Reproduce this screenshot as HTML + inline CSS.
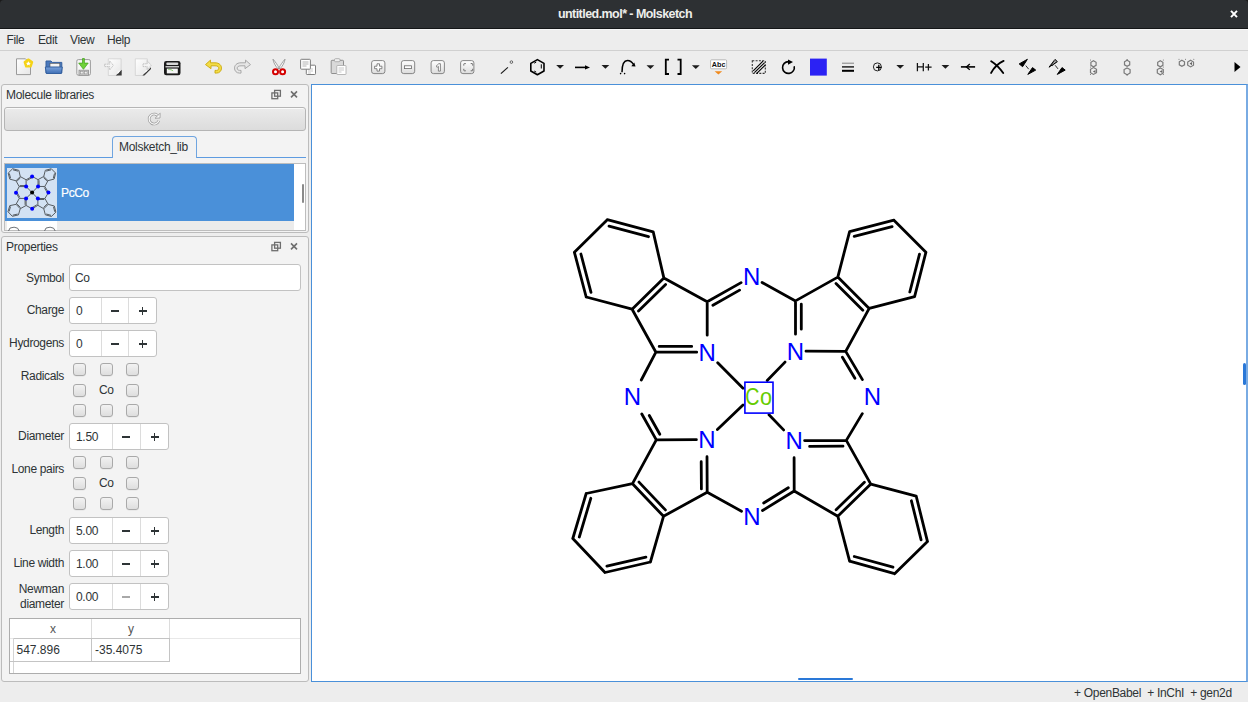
<!DOCTYPE html>
<html><head><meta charset="utf-8">
<style>
*{margin:0;padding:0;box-sizing:border-box}
html,body{width:1248px;height:702px;overflow:hidden;background:#ededed;font-family:"Liberation Sans",sans-serif;color:#2e3436}
.a{position:absolute}
#title{left:0;top:0;width:1248px;height:29px;background:#2d3033;border-bottom:1px solid #141618;border-radius:4px 4px 0 0}
#title .t{left:0;width:1248px;top:6.5px;padding-left:2px;text-align:center;color:#eeeeec;font-size:12.5px;font-weight:bold;letter-spacing:-0.55px}
#menu{left:0;top:29px;width:1248px;height:22px;background:#ededed;border-bottom:1px solid #d0d0d0;border-top:1px solid #f6f6f6}
.mi{top:3px;font-size:12px;letter-spacing:-0.4px;color:#2e3436}
#tb{left:0;top:51px;width:1248px;height:33px;background:#ededed}
.dock{background:#f3f3f3;border:1px solid #bcbcbc;border-radius:3px}
.lbl{font-size:12px;letter-spacing:-0.35px;color:#2e3436;text-align:right}
.inp{background:#fff;border:1px solid #c2c2c2;border-radius:3px}
.spin{background:#fff;border:1px solid #c2c2c2;border-radius:3px}
.spin .d{position:absolute;top:0;bottom:0;border-left:1px solid #dcdcdc}
.txt{font-size:12px;letter-spacing:-0.3px}
.cb{width:12.6px;height:12.6px;margin-top:-0.6px;border:1px solid #a9a9a9;border-radius:3px;background:linear-gradient(#f2f2f2,#dedede);box-shadow:0 0.5px 0 rgba(0,0,0,0.08)}
#canvas{left:311px;top:84px;width:937px;height:598px;background:#fff;border:1px solid #4a90d9;border-right:2px solid #79abe3}
.nl{font-family:"Liberation Sans",sans-serif;font-size:24px;fill:#0000ff;text-anchor:middle}
.co{font-family:"Liberation Sans",sans-serif;font-size:24px;fill:#66cc00}
</style></head><body>
<div class="a" style="left:0;top:0;width:1248px;height:8px;background:#1a1a1a"></div>
<div id="title" class="a"><div class="t a">untitled.mol* - Molsketch</div>
<svg class="a" style="left:1228px;top:9px" width="12" height="12"><path d="M3 1.9L9 8.1M9 1.9L3 8.1" stroke="#fff" stroke-width="2"/></svg>
</div>
<div id="menu" class="a">
<div class="mi a" style="left:6.5px">File</div>
<div class="mi a" style="left:38px">Edit</div>
<div class="mi a" style="left:70px">View</div>
<div class="mi a" style="left:107px">Help</div>
</div>
<div id="tb" class="a"></div>
<svg class="a" style="left:0;top:0" width="1248" height="90" viewBox="0 0 1248 90">
<defs>
<linearGradient id="pg" x1="0" y1="0" x2="1" y2="1"><stop offset="0" stop-color="#ffffff"/><stop offset="1" stop-color="#e6e6e6"/></linearGradient>
<linearGradient id="bg" x1="0" y1="0" x2="0" y2="1"><stop offset="0" stop-color="#ffffff"/><stop offset="1" stop-color="#dcdcdc"/></linearGradient>
<linearGradient id="fg" x1="0" y1="0" x2="0" y2="1"><stop offset="0" stop-color="#7aa3dc"/><stop offset="1" stop-color="#3e6eb4"/></linearGradient>
</defs>
<!-- new -->
<path d="M16.5 58.8h9l5 5v10.8h-14z" fill="url(#pg)" stroke="#9a9a9a" stroke-width="1"/>
<path d="M28.4 59.3l3.9 2.8-1.5 4.6h-4.8l-1.5-4.6z" fill="#f5d317" stroke="#f5d317" stroke-width="1.8" stroke-linejoin="round"/>
<path d="M28.4 61.2l.8 1.5 1.6.2-1.2 1.1.3 1.6-1.5-.8-1.5.8.3-1.6-1.2-1.1 1.6-.2z" fill="#fff"/>
<!-- open -->
<path d="M46 61h5l1.2 1.4h9.6v10.6h-15.8z" fill="#4a78bb" stroke="#34609f" stroke-width="1"/>
<rect x="50" y="63.3" width="9.8" height="4.8" fill="#f4f4f4" stroke="#555" stroke-width="0.6"/>
<path d="M45.3 67h17l-1 6.5h-15z" fill="url(#fg)" stroke="#34609f" stroke-width="1"/>
<!-- save -->
<rect x="76.8" y="59.6" width="13.6" height="15.6" rx="1.5" fill="#f6f6f6" stroke="#9c9c9c" stroke-width="1"/>
<rect x="79" y="70.2" width="9.4" height="5" fill="#d4d4d4" stroke="#8a8a8a" stroke-width="0.8"/>
<rect x="80.3" y="71.3" width="2.8" height="2.6" fill="#eee" stroke="#888" stroke-width="0.5"/>
<rect x="84.3" y="71.3" width="2.8" height="2.6" fill="#eee" stroke="#888" stroke-width="0.5"/>
<path d="M82.5 58.5h1.9v4.6h3.8l-4.75 6.2-4.75-6.2h3.8z" fill="#6fd13a" stroke="#3e9f18" stroke-width="0.7"/>
<!-- import -->
<path d="M108.3 58.8h12.8v13.5l-3.2 3.2h-9.6z" fill="url(#pg)" stroke="#cfcfcf" stroke-width="0.8"/>
<path d="M115.8 75.6l5.9-5.9v5.9z" fill="#3a3a3a"/><path d="M116.8 73.8l1.4-2.4 2.4-1.3-2.1 3.2z" fill="#fff"/>
<path d="M104.6 64.2h5v-3.4l3.8 4.6-3.8 4.6v-3.4h-5z" fill="#f4f4f4" stroke="#b0b0b0" stroke-width="0.7" stroke-dasharray="1.5 .6"/>
<!-- export -->
<path d="M135.3 58.8h12v13.2l-3.5 3.5h-8.5z" fill="url(#pg)" stroke="#cfcfcf" stroke-width="0.8"/>
<path d="M142.4 75.6l8.6-8.3v1.6l-6.6 6.7z" fill="#3a3a3a"/><path d="M143.5 73.5l2.5-3 3.5-2.2-3 3.3z" fill="#fff"/>
<path d="M143 63.8h4.2v-3l4 4.4-4 4.4v-3h-4.2z" fill="#f4f4f4" stroke="#b0b0b0" stroke-width="0.7" stroke-dasharray="1.5 .6"/>
<!-- print -->
<rect x="164" y="61" width="16.5" height="14.3" rx="2.2" fill="#1a1a1a"/>
<rect x="166.3" y="62.6" width="12" height="2.4" rx="1" fill="#d8d8d8"/>
<rect x="165.5" y="66.2" width="13.5" height="1.2" fill="#f0f0f0"/>
<rect x="166.8" y="68.6" width="11" height="4.8" fill="#f6f6f6"/>
<path d="M168.3 69.5c2 0 3.5.2 4.8 1.5" stroke="#6ac14a" stroke-width="0.8" fill="none"/>
<!-- undo -->
<path d="M205.5 64.6l5-4.5v2.7h4.5c4.5 0 6.5 2.7 6.5 5.3 0 2.8-2 5-5 5h-1.5v-2.7h1.5c1.4 0 2.3-1 2.3-2.3s-1.1-2.3-3.8-2.3h-4v2.9z" fill="#f3dc45" stroke="#c9a80b" stroke-width="0.9" stroke-linejoin="round"/>
<!-- redo -->
<path d="M250.5 64.6l-5-4.5v2.7h-4.5c-4.5 0-6.5 2.7-6.5 5.3 0 2.8 2 5 5 5h1.5v-2.7h-1.5c-1.4 0-2.3-1-2.3-2.3s1.1-2.3 3.8-2.3h4v2.9z" fill="#e6e6e6" stroke="#a8a8a8" stroke-width="1" stroke-linejoin="round"/>
<!-- cut -->
<path d="M273 59.2c.2 3 2.5 7 5.2 9.8l.8-1.2c-1.5-2.8-4-6.5-6-8.6zM285 59.2c-.2 3-2.5 7-5.2 9.8l-.8-1.2c1.5-2.8 4-6.5 6-8.6z" fill="#fafafa" stroke="#8a8a8a" stroke-width="0.8" stroke-linejoin="round"/>
<circle cx="275.5" cy="71.7" r="2.5" fill="#fff" stroke="#d40000" stroke-width="2"/>
<circle cx="282.6" cy="71.7" r="2.5" fill="#fff" stroke="#d40000" stroke-width="2"/>
<!-- copy -->
<rect x="306.3" y="65.2" width="9.2" height="9.3" rx="0.8" fill="#fff" stroke="#7d7d7d" stroke-width="1"/>
<path d="M308 69h5M308 71h5M308 73h3" stroke="#bbb" stroke-width="0.8"/>
<rect x="300.6" y="59.3" width="9.8" height="9.9" rx="0.8" fill="#fff" stroke="#7d7d7d" stroke-width="1"/>
<path d="M302.5 62h6M302.5 64h6M302.5 66h4" stroke="#aaa" stroke-width="0.9"/>
<!-- paste -->
<rect x="331.2" y="60.3" width="12.3" height="13.2" rx="0.8" fill="#d9d9d9" stroke="#8f8f8f" stroke-width="1"/>
<rect x="334.5" y="58.7" width="5.5" height="3" rx="1" fill="#f0f0f0" stroke="#999" stroke-width="0.7"/>
<rect x="336.8" y="65.5" width="9.2" height="9" rx="0.5" fill="#fff" stroke="#a8a8a8" stroke-width="0.8"/>
<path d="M338.5 68h5.5M338.5 70h5.5M338.5 72h3" stroke="#bbb" stroke-width="0.8"/>
<!-- zoom buttons -->
<g fill="url(#bg)" stroke="#7b7b7b" stroke-width="0.9">
<rect x="371.6" y="60.6" width="13.3" height="13" rx="2.3"/>
<rect x="401.4" y="60.6" width="13.3" height="13" rx="2.3"/>
<rect x="431.1" y="60.6" width="13.3" height="13" rx="2.3"/>
<rect x="460.6" y="60.6" width="13.3" height="13" rx="2.3"/>
</g>
<path d="M377 63.8h2.5v2.4h2.4v2.5h-2.4v2.4h-2.5v-2.4h-2.4v-2.5h2.4z" fill="#fff" stroke="#6b6b6b" stroke-width="0.8"/>
<rect x="404.5" y="65.8" width="7" height="2.8" fill="#fff" stroke="#6b6b6b" stroke-width="0.8"/>
<path d="M436 66.3l2.8-2.6h1.6v7.4h-2v-4.8l-1.2 1z" fill="#fff" stroke="#6b6b6b" stroke-width="0.8"/>
<path d="M463.8 65.6v-1.4q0-.6.6-.6h1.4M470.7 63.6h1.4q.6 0 .6.6v1.4M463.8 68.8v1.4q0 .6.6.6h1.4M470.7 70.8h1.4q.6 0 .6-.6v-1.4" fill="none" stroke="#6b6b6b" stroke-width="1"/>
<!-- bond tool -->
<path d="M500.9 73.6l7-6.2" stroke="#1a1a1a" stroke-width="1.2"/>
<circle cx="511.4" cy="62.1" r="1.3" fill="none" stroke="#444" stroke-width="0.8"/>
<!-- benzene -->
<path d="M537.4 59.6l6.6 3.8v7.6l-6.6 3.8-6.6-3.8v-7.6z" fill="none" stroke="#000" stroke-width="1.6" stroke-linejoin="round"/>
<path d="M534.2 63.2l2-1.1M541.3 64.3v4.2M534.2 71l2 1.1" stroke="#000" stroke-width="1"/>
<!-- dropdowns -->
<g fill="#1c1c1c">
<path d="M556.2 65h7.8l-3.9 3.8z"/>
<path d="M601.5 65h7.8l-3.9 3.8z"/>
<path d="M646.5 65.2h7.8l-3.9 3.8z"/>
<path d="M691.9 65.2h7.8l-3.9 3.8z"/>
<path d="M896.3 65.1h7.8l-3.9 3.7z"/>
<path d="M941.5 65.1h7.8l-3.9 3.7z"/>
</g>
<!-- arrow -->
<path d="M575 67.4h11" stroke="#000" stroke-width="1.6"/>
<path d="M585 65.2l5 2.2-5 2.2z" fill="#000"/>
<!-- curved arrow -->
<path d="M622 72.2c0-7 2-11.8 5.5-11.8 2.8 0 4.8 2 6 4" fill="none" stroke="#000" stroke-width="1.5"/>
<path d="M635.5 66.5l-4.2-.2 3-3.7z" fill="#000"/>
<circle cx="620.6" cy="73.6" r="0.8" fill="#000"/><circle cx="624.6" cy="73.6" r="0.8" fill="#000"/>
<!-- brackets -->
<path d="M669 59.6h-3.2v14.4h3.2M677.5 59.6h3.2v14.4h-3.2" fill="none" stroke="#000" stroke-width="1.8"/>
<!-- Abc -->
<rect x="710.6" y="59.8" width="16" height="9" rx="1" fill="#fff" stroke="#aaa" stroke-width="0.8"/>
<text x="718.7" y="67.2" font-family="Liberation Sans" font-weight="bold" font-size="7.6" text-anchor="middle" fill="#111" letter-spacing="0.1" transform="translate(718.7 0) scale(0.95 1) translate(-718.7 0)">Abc</text>
<path d="M714.6 71.3h7.6l-3.8 3.2z" fill="#f08a1e"/>
<!-- hatch -->
<rect x="752.3" y="60.7" width="13" height="12.7" fill="none" stroke="#333" stroke-width="1.1" stroke-dasharray="2 1.3"/>
<path d="M753.2 70.8l9.8-9.6M754.4 72.7l10.2-10M756.8 73.4l8.4-8.3" stroke="#000" stroke-width="1.15"/>
<!-- rotate -->
<path d="M788.6 61.6a5.9 5.9 0 1 0 5.6 4.6" fill="none" stroke="#000" stroke-width="1.6"/>
<path d="M788 59.4l5 2.5-5 2.8z" fill="#000"/>
<!-- color -->
<rect x="810" y="58.6" width="16.8" height="17" fill="#2b22f4"/>
<!-- line widths -->
<path d="M842 63.2h12" stroke="#777" stroke-width="0.9"/>
<path d="M842 66.9h12" stroke="#111" stroke-width="1.4"/>
<path d="M842 70.8h12" stroke="#000" stroke-width="2"/>
<!-- charge -->
<circle cx="877.4" cy="66.9" r="4" fill="none" stroke="#222" stroke-width="1"/>
<path d="M876.2 67.4h5.3M878.8 64.7v5.4" stroke="#000" stroke-width="1.3"/>
<path d="M917.4 62.9v8.3M923.3 62.9v8.3M917.4 66.9h5.9M925.2 67.2h6.4M928.4 64v6.4" stroke="#111" stroke-width="1.25" fill="none"/>
<!-- minus arrow -->
<path d="M960.9 66.9h14.2" stroke="#000" stroke-width="1.6"/>
<path d="M969.8 64l-3.4 2.9 3.4 2.9" fill="none" stroke="#000" stroke-width="1.3"/>
<!-- X -->
<path d="M991.2 61.2c4 2.5 9 7.5 12 11.8M1003.6 60.9c-4.5 2-9.5 6.5-12.5 12" fill="none" stroke="#000" stroke-width="1.9" stroke-linecap="round"/>
<!-- wedges -->
<path d="M1019.2 63.9l3.4 2.8 4.8-7.4z" fill="#000" stroke="#000" stroke-width="1" stroke-linejoin="round"/>
<path d="M1025.8 65.6l2.9 3.6" stroke="#000" stroke-width="0.8"/>
<path d="M1027.8 74.4l4.7-6.8 3.2 2.5z" fill="#000" stroke="#000" stroke-width="1" stroke-linejoin="round"/>
<path d="M1049 67.2l6-7.8 2.4 2.2z" fill="none" stroke="#000" stroke-width="1"/>
<path d="M1050.5 65.5l5.5-5M1052 66l5-4.5" stroke="#000" stroke-width="0.7"/>
<path d="M1055.2 65.3l2.8 3.6" stroke="#000" stroke-width="0.8"/>
<path d="M1057.3 74.4l4.7-6.8 3.2 2.5z" fill="#000" stroke="#000" stroke-width="1" stroke-linejoin="round"/>
<!-- align icons -->
<g fill="none" stroke="#7a7a7a" stroke-width="1.2">
<path d="M1093.5 60.8l2.6 1.5v3l-2.6 1.5-2.6-1.5v-3z"/>
<path d="M1093.5 67.6l3 1.7v3.4l-3 1.7-3-1.7v-3.4z"/>
<path d="M1127.1 60.3l2.6 1.5v3l-2.6 1.5-2.6-1.5v-3z"/>
<path d="M1127.1 67.9l3 1.7v3.4l-3 1.7-3-1.7v-3.4z"/>
<path d="M1160.3 60.8l2.6 1.5v3l-2.6 1.5-2.6-1.5v-3z"/>
<path d="M1160.3 67.9l3 1.7v3.4l-3 1.7-3-1.7v-3.4z"/>
<path d="M1181.9 60.3l2.6 1.5v3l-2.6 1.5-2.6-1.5v-3z"/>
<path d="M1190.6 60.3l2.9 1.7v3.2l-2.9 1.7-2.9-1.7v-3.2z"/>
</g>
<g fill="#666">
<path d="M1095.5 70l-2.6 1.5 2.6 1.5z"/><path d="M1162.3 70l-2.6 1.5 2.6 1.5z"/><path d="M1192 62l-2.4 1.6 2.4 1.6z"/>
<circle cx="1090.5" cy="60" r="0.5"/><circle cx="1090.5" cy="74.5" r="0.5"/><circle cx="1090.5" cy="67" r="0.5"/>
<circle cx="1163.3" cy="60" r="0.5"/><circle cx="1163.3" cy="74.5" r="0.5"/><circle cx="1163.3" cy="67" r="0.5"/>
<circle cx="1179" cy="59.3" r="0.5"/><circle cx="1185.5" cy="59.3" r="0.5"/><circle cx="1193.8" cy="59.3" r="0.5"/>
<circle cx="1127.1" cy="75" r="0.6"/><circle cx="1127.1" cy="59.6" r="0.6"/>
</g>
<!-- overflow -->
<path d="M1234.5 62l6 5-6 5z" fill="#000"/>
</svg>


<!-- left dock 1 -->
<div class="dock a" style="left:1px;top:84px;width:308px;height:149px"></div>
<div class="a txt" style="left:6px;top:88px">Molecule libraries</div>
<div class="a" style="left:4px;top:107px;width:302px;height:24px;border:1px solid #b5b5b5;border-radius:3px;box-shadow:inset 0 1px 0 #fafafa;background:linear-gradient(#ebebeb,#dcdcdc)"></div>
<div class="a" style="left:112px;top:136px;width:85px;height:22px;border:1px solid #6fa5e0;border-bottom:none;border-radius:4px 4px 0 0;background:#f2f2f2"></div>
<div class="a" style="left:4px;top:156.5px;width:108px;height:1.2px;background:#5d9be0"></div>
<div class="a" style="left:197px;top:156.5px;width:109px;height:1.2px;background:#5d9be0"></div>
<div class="a txt" style="left:119px;top:140px">Molsketch_lib</div>
<div class="a" style="left:4px;top:163px;width:302px;height:68px;background:#fff;border:1px solid #bdbdbd"></div>
<div class="a" style="left:5px;top:164px;width:289px;height:57px;background:#4a90d9"></div>
<div class="a" style="left:5px;top:221px;width:289px;height:9px;background:#ebebeb"></div>
<div class="a" style="left:7px;top:168px;width:50px;height:50px;background:#d3e2f3"></div>
<div class="a" style="left:7px;top:221px;width:50px;height:9px;background:#fff"></div>
<div class="a" style="left:302px;top:184px;width:2px;height:19px;background:#8a8a8a;border-radius:1px"></div>
<div class="a txt" style="left:61px;top:185.5px;color:#fff;font-size:12px;letter-spacing:-0.35px;-webkit-text-stroke:0.2px #fff">PcCo</div>


<svg class="a" style="left:0;top:0" width="312" height="240" viewBox="0 0 312 240">
<!-- dock icons 1 -->
<g fill="none" stroke="#6e6e6e" stroke-width="1.3">
<rect x="274.6" y="90.4" width="5.8" height="5.8"/>
<rect x="271.9" y="92.9" width="5.8" height="5.8"/>
<path d="M291 91.4l6 6M297 91.4l-6 6" stroke-width="1.6"/>
</g>
<!-- refresh -->
<path d="M158.6 116.8a5 5 0 1 0 .2 4" fill="none" stroke="#9a9a9a" stroke-width="2.6"/>
<path d="M158.6 116.8a5 5 0 1 0 .2 4" fill="none" stroke="#fafafa" stroke-width="1.2"/>
<path d="M155 118.3l5-.3.2-4.8z" fill="#fafafa" stroke="#9a9a9a" stroke-width="0.8" stroke-linejoin="round"/>
<path d="M32.10 192.60L26.12 186.58 M32.10 192.60L38.04 186.44 M32.10 192.60L26.08 198.39 M32.10 192.60L37.85 198.53 M26.12 186.58L26.12 179.78 M26.12 179.78L20.27 176.58 M20.27 176.58L15.98 180.77 M20.54 177.71L17.11 181.07 M15.98 180.77L19.19 186.58 M19.19 186.58L26.12 186.58 M19.79 185.58L25.52 185.58 M26.12 179.78L32.11 176.39 M27.13 180.35L32.08 177.55 M19.19 186.58L16.01 192.63 M20.27 176.58L18.83 170.34 M18.83 170.34L12.63 168.69 M17.99 171.15L12.96 169.81 M12.63 168.69L8.19 173.09 M8.19 173.09L9.78 179.13 M9.31 173.42L10.60 178.29 M9.78 179.13L15.98 180.77 M38.04 186.44L38.04 179.65 M39.04 185.84L39.04 180.25 M38.04 179.65L43.75 176.44 M43.75 176.44L47.99 180.67 M43.47 177.57L46.86 180.95 M47.99 180.67L44.82 186.47 M44.82 186.47L38.04 186.44 M38.04 179.65L32.11 176.39 M44.82 186.47L48.44 192.57 M44.26 187.50L47.27 192.57 M43.75 176.44L45.34 170.30 M45.34 170.30L51.32 168.76 M46.17 171.12L50.99 169.88 M51.32 168.76L55.64 173.09 M55.64 173.09L54.12 179.07 M54.53 173.43L53.30 178.24 M54.12 179.07L47.99 180.67 M26.08 198.39L26.12 205.48 M25.08 199.00L25.12 204.88 M26.12 205.48L20.22 208.73 M20.22 208.73L16.04 204.33 M20.53 207.61L17.17 204.08 M16.04 204.33L19.25 198.42 M19.25 198.42L26.08 198.39 M26.12 205.48L32.17 208.83 M19.25 198.42L16.01 192.63 M19.83 197.41L17.17 192.66 M16.04 204.33L9.78 205.65 M9.78 205.65L7.98 211.73 M10.57 206.51L9.11 211.44 M7.98 211.73L12.32 216.32 M12.32 216.32L18.45 214.90 M12.68 215.21L17.64 214.06 M18.45 214.90L20.22 208.73 M37.85 198.53L44.90 198.49 M38.46 199.52L44.30 199.49 M44.90 198.49L48.21 204.39 M48.21 204.39L43.75 208.72 M47.08 204.09L43.48 207.58 M43.75 208.72L37.86 205.32 M37.86 205.32L37.85 198.53 M37.86 205.32L32.17 208.83 M36.83 204.78L32.15 207.66 M44.90 198.49L48.44 192.57 M48.21 204.39L54.33 206.02 M54.33 206.02L55.86 212.15 M53.51 206.84L54.74 211.81 M55.86 212.15L51.42 216.48 M51.42 216.48L45.34 214.79 M51.11 215.36L46.19 213.99 M45.34 214.79L43.75 208.72" stroke="#50555a" stroke-width="0.95" fill="none"/>
<circle cx="32.17" cy="208.83" r="2" fill="#0000ff"/>
<circle cx="26.08" cy="198.39" r="2" fill="#0000ff"/>
<circle cx="37.85" cy="198.53" r="2" fill="#0000ff"/>
<circle cx="16.01" cy="192.63" r="2" fill="#0000ff"/>
<circle cx="48.44" cy="192.57" r="2" fill="#0000ff"/>
<circle cx="32.11" cy="176.39" r="2" fill="#0000ff"/>
<circle cx="26.12" cy="186.58" r="2" fill="#0000ff"/>
<circle cx="38.04" cy="186.44" r="2" fill="#0000ff"/>
<circle cx="32.10" cy="192.60" r="2" fill="#000"/>
<!-- next item partial -->
<path d="M8.5 231l1.6-3 4-.8 3.5 1 1.6 2.8M44.5 231l1.6-3 4-.8 3.5 1 1.6 2.8" fill="none" stroke="#5c6166" stroke-width="0.9"/>
</svg>


<!-- dock 2 -->
<div class="dock a" style="left:1px;top:236px;width:308px;height:446px"></div>
<div class="a txt" style="left:6px;top:240px">Properties</div>
<svg class="a" style="left:0;top:236px" width="312" height="20" viewBox="0 236 312 20">
<g fill="none" stroke="#6e6e6e" stroke-width="1.3">
<rect x="274.6" y="242.4" width="5.8" height="5.8"/>
<rect x="271.9" y="244.9" width="5.8" height="5.8"/>
<path d="M291 243.4l6 6M297 243.4l-6 6" stroke-width="1.6"/>
</g>
</svg>

<div class="a lbl" style="left:0;width:64px;top:271px">Symbol</div>
<div class="a inp" style="left:69px;top:264px;width:232px;height:27px"></div>
<div class="a txt" style="left:75px;top:271px">Co</div>
<div class="a lbl" style="left:0;width:64px;top:303px">Charge</div>
<div class="a spin" style="left:69px;top:297px;width:88px;height:27px"><div class="d" style="left:31px"></div><div class="d" style="left:58px"></div></div>
<div class="a txt" style="left:76px;top:304px">0</div>
<div class="a" style="left:110.5px;top:310.0px;width:8px;height:1.6px;background:#2e3436"></div>
<div class="a" style="left:138.5px;top:310.0px;width:8px;height:1.6px;background:#2e3436"></div>
<div class="a" style="left:141.7px;top:306.8px;width:1.6px;height:8px;background:#2e3436"></div>
<div class="a lbl" style="left:0;width:64px;top:336px">Hydrogens</div>
<div class="a spin" style="left:69px;top:330px;width:88px;height:27px"><div class="d" style="left:31px"></div><div class="d" style="left:58px"></div></div>
<div class="a txt" style="left:76px;top:337px">0</div>
<div class="a" style="left:110.5px;top:343.0px;width:8px;height:1.6px;background:#2e3436"></div>
<div class="a" style="left:138.5px;top:343.0px;width:8px;height:1.6px;background:#2e3436"></div>
<div class="a" style="left:141.7px;top:339.8px;width:1.6px;height:8px;background:#2e3436"></div>
<div class="a lbl" style="left:0;width:64px;top:369px">Radicals</div>
<div class="a cb" style="left:73px;top:364px"></div>
<div class="a cb" style="left:100px;top:364px"></div>
<div class="a cb" style="left:126px;top:364px"></div>
<div class="a cb" style="left:73px;top:384.5px"></div>
<div class="a txt" style="left:99px;top:383px">Co</div>
<div class="a cb" style="left:126px;top:384.5px"></div>
<div class="a cb" style="left:73px;top:405px"></div>
<div class="a cb" style="left:100px;top:405px"></div>
<div class="a cb" style="left:126px;top:405px"></div>
<div class="a lbl" style="left:0;width:64px;top:429px">Diameter</div>
<div class="a spin" style="left:69px;top:423px;width:100px;height:27px"><div class="d" style="left:42px"></div><div class="d" style="left:70px"></div></div>
<div class="a txt" style="left:76px;top:430px">1.50</div>
<div class="a" style="left:122.0px;top:436.0px;width:8px;height:1.6px;background:#2e3436"></div>
<div class="a" style="left:150.5px;top:436.0px;width:8px;height:1.6px;background:#2e3436"></div>
<div class="a" style="left:153.7px;top:432.8px;width:1.6px;height:8px;background:#2e3436"></div>
<div class="a lbl" style="left:0;width:64px;top:462px">Lone pairs</div>
<div class="a cb" style="left:73px;top:457px"></div>
<div class="a cb" style="left:100px;top:457px"></div>
<div class="a cb" style="left:126px;top:457px"></div>
<div class="a cb" style="left:73px;top:477.5px"></div>
<div class="a txt" style="left:99px;top:476px">Co</div>
<div class="a cb" style="left:126px;top:477.5px"></div>
<div class="a cb" style="left:73px;top:498px"></div>
<div class="a cb" style="left:100px;top:498px"></div>
<div class="a cb" style="left:126px;top:498px"></div>
<div class="a lbl" style="left:0;width:64px;top:523px">Length</div>
<div class="a spin" style="left:69px;top:517px;width:100px;height:27px"><div class="d" style="left:42px"></div><div class="d" style="left:70px"></div></div>
<div class="a txt" style="left:76px;top:524px">5.00</div>
<div class="a" style="left:122.0px;top:530.0px;width:8px;height:1.6px;background:#2e3436"></div>
<div class="a" style="left:150.5px;top:530.0px;width:8px;height:1.6px;background:#2e3436"></div>
<div class="a" style="left:153.7px;top:526.8px;width:1.6px;height:8px;background:#2e3436"></div>
<div class="a lbl" style="left:0;width:64px;top:556px">Line width</div>
<div class="a spin" style="left:69px;top:550px;width:100px;height:27px"><div class="d" style="left:42px"></div><div class="d" style="left:70px"></div></div>
<div class="a txt" style="left:76px;top:557px">1.00</div>
<div class="a" style="left:122.0px;top:563.0px;width:8px;height:1.6px;background:#2e3436"></div>
<div class="a" style="left:150.5px;top:563.0px;width:8px;height:1.6px;background:#2e3436"></div>
<div class="a" style="left:153.7px;top:559.8px;width:1.6px;height:8px;background:#2e3436"></div>
<div class="a lbl" style="left:0;width:64px;top:582px">Newman</div>
<div class="a lbl" style="left:0;width:64px;top:597px">diameter</div>
<div class="a spin" style="left:69px;top:583px;width:100px;height:27px"><div class="d" style="left:42px"></div><div class="d" style="left:70px"></div></div>
<div class="a txt" style="left:76px;top:590px">0.00</div>
<div class="a" style="left:122.0px;top:596.0px;width:8px;height:1.6px;background:#a8a8a8"></div>
<div class="a" style="left:150.5px;top:596.0px;width:8px;height:1.6px;background:#2e3436"></div>
<div class="a" style="left:153.7px;top:592.8px;width:1.6px;height:8px;background:#2e3436"></div>

<div class="a" style="left:9px;top:618px;width:292px;height:56px;background:#fff;border:1px solid #adadad"></div>
<div class="a" style="left:10px;top:638px;width:290px;height:1px;background:#e8e8e8"></div>
<div class="a" style="left:91px;top:619px;width:1px;height:19px;background:#dcdcdc"></div>
<div class="a" style="left:169px;top:619px;width:1px;height:19px;background:#dcdcdc"></div>
<div class="a" style="left:13px;top:638px;width:157px;height:1px;background:#c4c4c4"></div>
<div class="a" style="left:13px;top:638px;width:1px;height:35px;background:#d4d4d4"></div>
<div class="a" style="left:10px;top:661px;width:160px;height:1px;background:#c4c4c4"></div>
<div class="a" style="left:91px;top:638px;width:1px;height:24px;background:#c4c4c4"></div>
<div class="a" style="left:169px;top:638px;width:1px;height:24px;background:#c4c4c4"></div>
<div class="a txt" style="left:50px;top:621.5px;color:#555">x</div>
<div class="a txt" style="left:128px;top:621.5px;color:#555">y</div>
<div class="a txt" style="left:16.5px;top:643px;letter-spacing:0">547.896</div>
<div class="a txt" style="left:95px;top:643px;letter-spacing:0">-35.4075</div>


<div id="canvas" class="a"></div>
<svg class="a" style="left:0;top:0" width="1248" height="702" viewBox="0 0 1248 702">
<path d="M743.0 388.2L717.7 362.8 M767.2 380.5L785.0 362.1 M743.0 405.0L717.4 429.6 M769.0 414.8L783.6 429.9 M707.2 335.2L707.2 301.8 M707.2 301.8L663.9 278.1 M663.9 278.1L632.1 309.2 M665.6 284.6L638.5 311.0 M632.1 309.2L655.9 352.2 M655.9 352.2L696.7 352.2 M659.2 346.4L691.7 346.4 M707.2 301.8L741.1 282.6 M712.9 305.2L739.6 290.1 M655.9 352.2L641.3 380.0 M663.9 278.1L653.2 231.9 M653.2 231.9L607.3 219.7 M648.5 236.7L609.0 226.2 M607.3 219.7L574.4 252.3 M574.4 252.3L586.2 297.0 M580.9 254.0L591.0 292.3 M586.2 297.0L632.1 309.2 M795.5 334.2L795.5 300.9 M801.3 329.2L801.3 304.2 M795.5 300.9L837.8 277.1 M837.8 277.1L869.2 308.4 M836.0 283.5L862.8 310.2 M869.2 308.4L845.7 351.4 M845.7 351.4L806.0 351.2 M795.5 300.9L762.1 282.5 M845.7 351.4L862.4 379.6 M842.4 357.2L854.9 378.3 M837.8 277.1L849.6 231.6 M849.6 231.6L893.9 220.2 M854.2 236.4L892.1 226.6 M893.9 220.2L925.9 252.3 M925.9 252.3L914.6 296.6 M919.5 254.1L909.8 292.0 M914.6 296.6L869.2 308.4 M707.0 456.7L707.2 492.2 M701.2 461.7L701.4 488.9 M707.2 492.2L663.5 516.3 M663.5 516.3L632.5 483.7 M665.4 509.9L639.0 482.1 M632.5 483.7L656.3 439.9 M656.3 439.9L696.4 439.7 M707.2 492.2L741.5 511.2 M656.3 439.9L641.8 414.0 M659.8 434.2L649.3 415.5 M632.5 483.7L586.2 493.5 M586.2 493.5L572.8 538.5 M590.8 498.3L579.3 537.0 M572.8 538.5L605.0 572.5 M605.0 572.5L650.4 562.0 M606.9 566.1L645.9 557.1 M650.4 562.0L663.5 516.3 M804.6 440.6L846.3 440.4 M809.6 446.4L843.0 446.2 M846.3 440.4L870.8 484.1 M870.8 484.1L837.8 516.2 M864.4 482.2L836.1 509.7 M837.8 516.2L794.2 491.0 M794.2 491.0L794.1 457.7 M794.2 491.0L762.5 510.5 M788.3 487.8L763.7 503.0 M846.3 440.4L862.3 413.6 M870.8 484.1L916.2 496.2 M916.2 496.2L927.5 541.6 M911.4 500.8L921.1 539.8 M927.5 541.6L894.6 573.7 M894.6 573.7L849.6 561.2 M893.0 567.2L854.3 556.5 M849.6 561.2L837.8 516.2" stroke="#000" stroke-width="2.8" stroke-linecap="round" fill="none"/>
<text x="752.0" y="525.4" class="nl">N</text>
<text x="706.9" y="448.1" class="nl">N</text>
<text x="794.1" y="449.1" class="nl">N</text>
<text x="632.3" y="405.4" class="nl">N</text>
<text x="872.5" y="405.0" class="nl">N</text>
<text x="751.6" y="285.1" class="nl">N</text>
<text x="707.2" y="360.6" class="nl">N</text>
<text x="795.5" y="359.6" class="nl">N</text>
<text x="0" y="0" class="co" transform="translate(745.3 405.4) scale(0.82 1)">C</text>
<text x="0" y="0" class="co" transform="translate(760 405.4) scale(0.9 1)">o</text>
<rect x="744.9" y="382.2" width="28.1" height="30.9" fill="none" stroke="#00f" stroke-width="1.6"/>
</svg>
<div class="a" style="left:1243px;top:363px;width:2.5px;height:22px;background:#2a78d8;border-radius:1.5px"></div>
<div class="a" style="left:798px;top:677.5px;width:54.5px;height:2.5px;background:#2a78d8;border-radius:1.5px"></div>
<div class="a" style="left:0;top:683px;width:1248px;height:19px;background:#ededed"></div>
<div class="a txt" style="left:1074px;top:686px">+ OpenBabel &nbsp;+ InChI &nbsp;+ gen2d</div>
</body></html>
